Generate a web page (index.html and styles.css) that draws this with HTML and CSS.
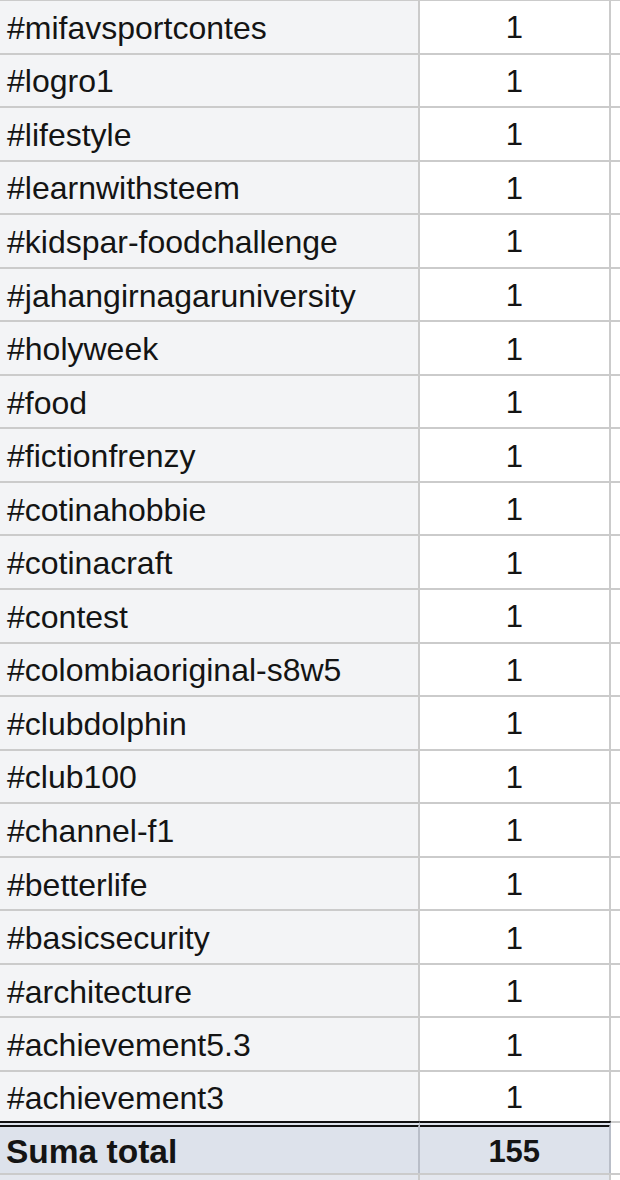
FILE: index.html
```html
<!DOCTYPE html>
<html lang="es">
<head>
<meta charset="utf-8">
<title>Tabla</title>
<link rel="stylesheet" href="styles.css">
</head>
<body>
<div class="sheet">
  <div class="row"><div class="c1">#mifavsportcontes</div><div class="c2">1</div><div class="c3"></div></div>
  <div class="row"><div class="c1">#logro1</div><div class="c2">1</div><div class="c3"></div></div>
  <div class="row"><div class="c1">#lifestyle</div><div class="c2">1</div><div class="c3"></div></div>
  <div class="row"><div class="c1">#learnwithsteem</div><div class="c2">1</div><div class="c3"></div></div>
  <div class="row"><div class="c1">#kidspar-foodchallenge</div><div class="c2">1</div><div class="c3"></div></div>
  <div class="row"><div class="c1">#jahangirnagaruniversity</div><div class="c2">1</div><div class="c3"></div></div>
  <div class="row"><div class="c1">#holyweek</div><div class="c2">1</div><div class="c3"></div></div>
  <div class="row"><div class="c1">#food</div><div class="c2">1</div><div class="c3"></div></div>
  <div class="row"><div class="c1">#fictionfrenzy</div><div class="c2">1</div><div class="c3"></div></div>
  <div class="row"><div class="c1">#cotinahobbie</div><div class="c2">1</div><div class="c3"></div></div>
  <div class="row"><div class="c1">#cotinacraft</div><div class="c2">1</div><div class="c3"></div></div>
  <div class="row"><div class="c1">#contest</div><div class="c2">1</div><div class="c3"></div></div>
  <div class="row"><div class="c1">#colombiaoriginal-s8w5</div><div class="c2">1</div><div class="c3"></div></div>
  <div class="row"><div class="c1">#clubdolphin</div><div class="c2">1</div><div class="c3"></div></div>
  <div class="row"><div class="c1">#club100</div><div class="c2">1</div><div class="c3"></div></div>
  <div class="row"><div class="c1">#channel-f1</div><div class="c2">1</div><div class="c3"></div></div>
  <div class="row"><div class="c1">#betterlife</div><div class="c2">1</div><div class="c3"></div></div>
  <div class="row"><div class="c1">#basicsecurity</div><div class="c2">1</div><div class="c3"></div></div>
  <div class="row"><div class="c1">#architecture</div><div class="c2">1</div><div class="c3"></div></div>
  <div class="row"><div class="c1">#achievement5.3</div><div class="c2">1</div><div class="c3"></div></div>
  <div class="row last"><div class="c1">#achievement3</div><div class="c2">1</div><div class="c3"></div></div>
  <div class="row total"><div class="c1">Suma total</div><div class="c2">155</div><div class="c3"></div></div>
  <div class="row filler"><div class="c1"></div><div class="c2"></div><div class="c3"></div></div>
</div>
</body>
</html>
```

FILE: styles.css
```css
html, body {
  margin: 0;
  padding: 0;
  background: #ffffff;
}

body {
  font-family: "Liberation Sans", Arial, sans-serif;
  color: #141414;
  overflow: hidden;
}

.sheet {
  margin-top: -1px;
  width: 620px;
}

.row {
  display: grid;
  grid-template-columns: 419.5px 191.5px 1fr;
  height: 53.55px;
  box-sizing: border-box;
  border-top: 2px solid #cbcbcb;
}

.row.last {
  height: 51.3px;
}

.c1, .c2, .c3 {
  display: flex;
  align-items: center;
  font-size: 32px;
  padding-top: 3px;
  white-space: nowrap;
  overflow: hidden;
  box-sizing: border-box;
  border-right: 2px solid #cbcbcb;
}

.c1 {
  background: #f3f4f6;
  padding-left: 7px;
}

.c2 {
  background: #ffffff;
  justify-content: center;
  font-size: 31px;
}

.c3 {
  background: #ffffff;
  border-right: none;
}

.row.total {
  height: 52px;
  border-top: none;
  background: #ffffff;
}

.row.total .c1,
.row.total .c2 {
  background: #dde2eb;
  font-weight: bold;
  border-top: 6px double #111111;
  border-right-color: #b9bec8;
  padding-top: 4px;
}

.row.total .c1 {
  padding-left: 6px;
  font-size: 33.5px;
}

.row.total .c3 {
  border-top: 2px solid #cbcbcb;
  align-self: start;
  height: 6px;
  padding-top: 0;
}

.row.filler {
  height: 20px;
}

.row.filler .c1,
.row.filler .c2 {
  background: #e4e7ee;
}
```
